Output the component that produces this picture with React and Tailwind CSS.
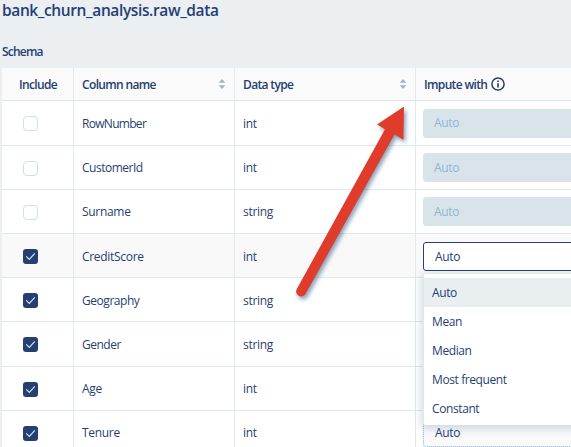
import React from "react";

const rows = [
  { name: "RowNumber", type: "int", on: false, value: "Auto", tracking: "tracking-[-0.7px]" },
  { name: "CustomerId", type: "int", on: false, value: "Auto", tracking: "tracking-[-0.5px]" },
  { name: "Surname", type: "string", on: false, value: "Auto" },
  { name: "CreditScore", type: "int", on: true, focus: true, value: "Auto" },
  { name: "Geography", type: "string", on: true, tracking: "tracking-[-0.45px]" },
  { name: "Gender", type: "string", on: true, tracking: "tracking-[-0.5px]" },
  { name: "Age", type: "int", on: true },
  { name: "Tenure", type: "int", on: true, value: "Auto" },
];

const options = ["Auto", "Mean", "Median", "Most frequent", "Constant"];

function Checkbox({ on }) {
  return on ? (
    <span className="flex h-[15px] w-[15px] items-center justify-center rounded-[3px] bg-[#253f72]">
      <svg width="11" height="9" viewBox="0 0 11 9" fill="none" stroke="#d3e4ef" strokeWidth="1.2">
        <path d="M1.2 4.4 4.3 7.4 9.8 1.4" />
      </svg>
    </span>
  ) : (
    <span className="block h-[15px] w-[15px] rounded-[4px] border border-[#cfdfe9] bg-white" />
  );
}

function Sorter() {
  return (
    <svg width="8" height="12" viewBox="0 0 8 12" className="mb-[2px] shrink-0 fill-[#9db5c9]">
      <path d="M4 1 7.3 4.8H0.7Z" />
      <path d="M4 11 7.3 7.2H0.7Z" />
    </svg>
  );
}

function Select({ row }) {
  const look = row.focus
    ? "border-[#253f72] bg-white text-[#253f72] pl-[11px] pt-[2px]"
    : row.on
      ? "border-dotted border-[#8fb4d6] bg-[#fafafa] text-[#253f72] pl-[11px]"
      : "border-[#d9e4ea] bg-[#d9e4ea] text-[#8fb4d6] pl-[10px]";
  return (
    <div className={`flex h-[29px] w-[170px] items-center rounded-[3px] border ${look}`}>{row.value}</div>
  );
}

function Menu() {
  return (
    <div className="absolute left-[423px] top-[274px] z-10 w-[170px] rounded-[2px] border-l border-[#dfe8ed] bg-white pb-[2px] pt-1 tracking-[-0.4px] shadow-[0_2px_9px_2px_rgba(37,80,114,0.2)]">
      {options.map((o, i) => (
        <div key={o} className={`flex h-[29px] items-center pl-2 ${i === 0 ? "bg-[#e9eef1]" : ""}`}>
          {o}
        </div>
      ))}
    </div>
  );
}

function Arrow() {
  return (
    <svg className="absolute left-0 top-0 z-20 drop-shadow-[2px_3px_2px_rgba(40,90,130,0.55)]" width="571" height="447">
      <path d="M404 106.5 377 124.5 385 129.3 296.8 289A5 5 0 0 0 305.5 294L394.5 134.6 403.4 139.8Z" fill="#e03c2b" />
    </svg>
  );
}

export default function App() {
  return (
    <div className="relative h-[447px] w-[571px] overflow-hidden bg-[#ebeff2] font-['Open_Sans','Noto_Sans',sans-serif] text-[12px] leading-[16px] tracking-[-0.3px] text-[#253f72]">
      <h1 className="h-[42px] pl-[2px] text-[15.5px] font-semibold leading-[21px] tracking-[-0.38px]">bank_churn_analysis.raw_data</h1>
      <div className="h-[26px] pl-[2px] pt-[2px] font-semibold tracking-[-0.8px]">Schema</div>
      <div className="ml-[2px] w-[600px] bg-white">
        <div className="grid h-[33px] grid-cols-[72px_161px_181px_1fr] border-b border-[#dce6ec] bg-[#fafafa] font-semibold tracking-[-0.65px]">
          <div className="flex items-center border-r border-[#e1e9ee] pl-[17px] pt-[2px]">Include</div>
          <div className="flex items-center justify-between border-r border-[#e1e9ee] pl-2 pr-[8px] pt-[2px]">Column name<Sorter /></div>
          <div className="flex items-center justify-between border-r border-[#e1e9ee] pl-2 pr-[8px] pt-[2px]">Data type<Sorter /></div>
          <div className="flex items-center gap-1 pl-2 pt-[2px]">
            Impute with
            <svg className="mb-[2px]" width="14" height="14" viewBox="0 0 14 14" fill="none" stroke="#253f72">
              <circle cx="7" cy="7" r="6.1" strokeWidth="1.5" />
              <path d="M7 6.2V10.4M7 3.6V5" strokeWidth="1.6" />
            </svg>
          </div>
        </div>
        <div className="pt-[0.4px]">
          {rows.map((r) => (
            <div key={r.name} className={`grid h-[44.2px] grid-cols-[72px_161px_181px_1fr] border-b border-[#dfe8ed] ${r.focus ? "bg-[#f9f9f9]" : ""}`}>
              <div className="flex items-center border-r border-[#e1e9ee] pl-[21px] pt-[2px]"><Checkbox on={r.on} /></div>
              <div className={`flex items-center border-r border-[#e1e9ee] pl-2 pt-[2px] ${r.tracking ?? ""}`}>{r.name}</div>
              <div className="flex items-center border-r border-[#e1e9ee] pl-2 pt-[2px]">{r.type}</div>
              <div className="flex items-center pl-[7px] pt-[1px]">{r.value && <Select row={r} />}</div>
            </div>
          ))}
        </div>
      </div>
      <Menu />
      <Arrow />
    </div>
  );
}
